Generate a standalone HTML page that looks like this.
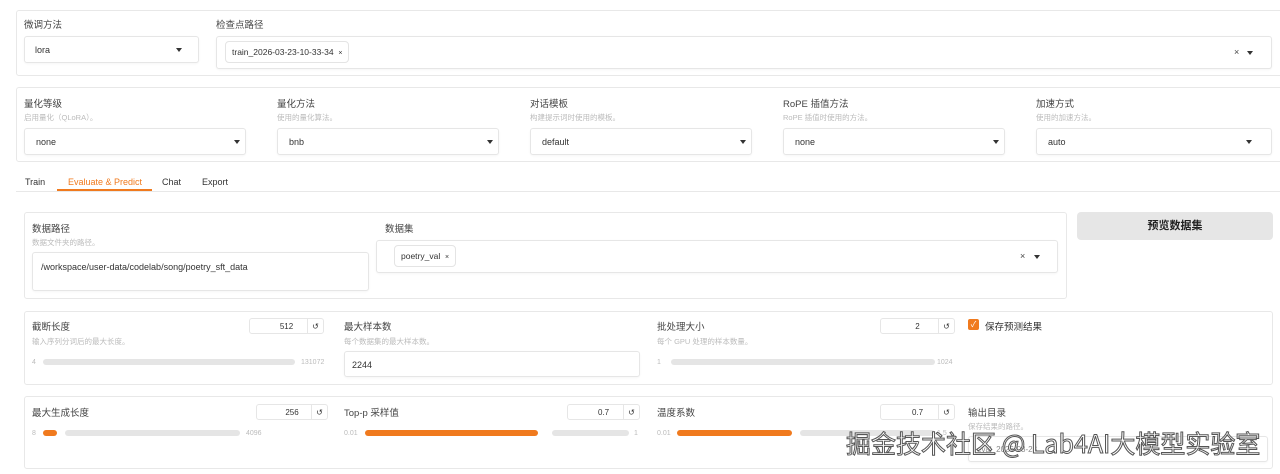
<!DOCTYPE html>
<html><head><meta charset="utf-8"><style>
*{box-sizing:border-box;margin:0;padding:0}
body{width:1280px;height:474px;background:#fff;font-family:"Liberation Sans","Noto Sans CJK SC",sans-serif;color:#333;position:relative;overflow:hidden;font-size:9px}
.a{position:absolute}
.box{position:absolute;border:1px solid #e8e8e8;border-radius:3px;background:#fff}
.lbl{position:absolute;font-size:9.5px;color:#444}
.sub{position:absolute;font-size:7.5px;color:#bbb}
.inp{position:absolute;border:1px solid #e6e6e6;border-radius:3px;background:#fff;font-size:9px;color:#333;box-shadow:0 1px 2px rgba(0,0,0,.04)}
.arr{position:absolute;width:0;height:0;border-left:3.5px solid transparent;border-right:3.5px solid transparent;border-top:4px solid #333}
.num{position:absolute;border:1px solid #e6e6e6;border-radius:3px;height:16px;font-size:8px;text-align:center;line-height:15px}
.num span{position:absolute;right:0;top:0;width:16px;height:14px;border-left:1px solid #e6e6e6;font-size:8px}
.track{position:absolute;height:6px;background:#e5e5e5;border-radius:3px}
.fill{position:absolute;height:6px;background:#f07a1e;border-radius:3px}
.mm{position:absolute;font-size:7px;color:#bbb}
.tag{position:absolute;border:1px solid #e4e4e4;border-radius:4px;font-size:8.5px;padding:0 6px;height:22px;line-height:21px;background:#fff}
.x{position:absolute;font-size:9px;color:#444}
</style></head><body>
<div class="box" style="left:16px;top:10px;width:1270px;height:66px"></div>
<div class="lbl" style="left:24px;top:17px">微调方法</div>
<div class="inp" style="left:24px;top:36px;width:175px;height:27px;padding:8px 10px">lora</div>
<div class="arr" style="left:176px;top:48px"></div>
<div class="lbl" style="left:216px;top:17px">检查点路径</div>
<div class="inp" style="left:216px;top:36px;width:1056px;height:33px"></div>
<div class="tag" style="left:225px;top:41px">train_2026-03-23-10-33-34 &nbsp;<span style="font-size:7px">×</span></div>
<div class="x" style="left:1234px;top:47px">×</div>
<div class="arr" style="left:1247px;top:51px"></div>

<div class="box" style="left:16px;top:87px;width:1270px;height:75px"></div>
<div class="lbl" style="left:24px;top:96px">量化等级</div><div class="sub" style="left:24px;top:112px">启用量化（QLoRA）。</div>
<div class="inp" style="left:24px;top:128px;width:222px;height:27px;padding:8px 11px">none</div><div class="arr" style="left:234px;top:140px"></div>
<div class="lbl" style="left:277px;top:96px">量化方法</div><div class="sub" style="left:277px;top:112px">使用的量化算法。</div>
<div class="inp" style="left:277px;top:128px;width:222px;height:27px;padding:8px 11px">bnb</div><div class="arr" style="left:487px;top:140px"></div>
<div class="lbl" style="left:530px;top:96px">对话模板</div><div class="sub" style="left:530px;top:112px">构建提示词时使用的模板。</div>
<div class="inp" style="left:530px;top:128px;width:222px;height:27px;padding:8px 11px">default</div><div class="arr" style="left:740px;top:140px"></div>
<div class="lbl" style="left:783px;top:96px">RoPE 插值方法</div><div class="sub" style="left:783px;top:112px">RoPE 插值时使用的方法。</div>
<div class="inp" style="left:783px;top:128px;width:222px;height:27px;padding:8px 11px">none</div><div class="arr" style="left:993px;top:140px"></div>
<div class="lbl" style="left:1036px;top:96px">加速方式</div><div class="sub" style="left:1036px;top:112px">使用的加速方法。</div>
<div class="inp" style="left:1036px;top:128px;width:236px;height:27px;padding:8px 11px">auto</div><div class="arr" style="left:1246px;top:140px"></div>

<div class="a" style="left:16px;top:191px;width:1264px;height:1px;background:#e8e8e8"></div>
<div class="a" style="left:25px;top:177px;font-size:9px">Train</div>
<div class="a" style="left:68px;top:177px;font-size:9px;color:#f07a1e">Evaluate &amp; Predict</div>
<div class="a" style="left:57px;top:189px;width:95px;height:2px;background:#f07a1e"></div>
<div class="a" style="left:162px;top:177px;font-size:9px">Chat</div>
<div class="a" style="left:202px;top:177px;font-size:9px">Export</div>

<div class="box" style="left:24px;top:212px;width:1043px;height:87px"></div>
<div class="lbl" style="left:32px;top:221px">数据路径</div><div class="sub" style="left:32px;top:237px">数据文件夹的路径。</div>
<div class="inp" style="left:32px;top:252px;width:337px;height:39px;padding:9px 8px">/workspace/user-data/codelab/song/poetry_sft_data</div>
<div class="lbl" style="left:385px;top:221px">数据集</div>
<div class="inp" style="left:376px;top:240px;width:682px;height:33px"></div>
<div class="tag" style="left:394px;top:245px">poetry_val &nbsp;<span style="font-size:7px">×</span></div>
<div class="x" style="left:1020px;top:251px">×</div><div class="arr" style="left:1034px;top:255px"></div>
<div class="a" style="left:1077px;top:212px;width:196px;height:28px;background:#e6e6e6;border-radius:4px;text-align:center;line-height:28px;font-size:11px;font-weight:bold;color:#222">预览数据集</div>

<div class="box" style="left:24px;top:311px;width:1249px;height:74px"></div>
<div class="lbl" style="left:32px;top:319px">截断长度</div><div class="sub" style="left:32px;top:336px">输入序列分词后的最大长度。</div>
<div class="num" style="left:249px;top:318px;width:75px">512<span>↺</span></div>
<div class="mm" style="left:32px;top:359px">4</div><div class="track" style="left:43px;top:359px;width:252px"></div><div class="mm" style="left:301px;top:359px">131072</div>
<div class="lbl" style="left:344px;top:319px">最大样本数</div><div class="sub" style="left:344px;top:336px">每个数据集的最大样本数。</div>
<div class="inp" style="left:344px;top:351px;width:296px;height:26px;padding:8px 7px">2244</div>
<div class="lbl" style="left:657px;top:319px">批处理大小</div><div class="sub" style="left:657px;top:336px">每个 GPU 处理的样本数量。</div>
<div class="num" style="left:880px;top:318px;width:75px">2<span>↺</span></div>
<div class="mm" style="left:657px;top:359px">1</div><div class="track" style="left:671px;top:359px;width:264px"></div><div class="mm" style="left:937px;top:359px">1024</div>
<div class="a" style="left:968px;top:319px;width:11px;height:11px;background:#f07a1e;border-radius:2px;color:#fff;font-size:8px;text-align:center;line-height:11px">✓</div>
<div class="lbl" style="left:985px;top:319px;color:#333">保存预测结果</div>

<div class="box" style="left:24px;top:396px;width:1249px;height:73px"></div>
<div class="lbl" style="left:32px;top:405px">最大生成长度</div>
<div class="num" style="left:256px;top:404px;width:72px">256<span>↺</span></div>
<div class="mm" style="left:32px;top:430px">8</div><div class="fill" style="left:43px;top:430px;width:14px"></div><div class="track" style="left:65px;top:430px;width:175px"></div><div class="mm" style="left:246px;top:430px">4096</div>
<div class="lbl" style="left:344px;top:405px">Top-p 采样值</div>
<div class="num" style="left:567px;top:404px;width:73px">0.7<span>↺</span></div>
<div class="mm" style="left:344px;top:430px">0.01</div><div class="fill" style="left:365px;top:430px;width:173px"></div><div class="track" style="left:552px;top:430px;width:77px"></div><div class="mm" style="left:634px;top:430px">1</div>
<div class="lbl" style="left:657px;top:405px">温度系数</div>
<div class="num" style="left:880px;top:404px;width:75px">0.7<span>↺</span></div>
<div class="mm" style="left:657px;top:430px">0.01</div><div class="fill" style="left:677px;top:430px;width:115px"></div><div class="track" style="left:800px;top:430px;width:135px"></div><div class="mm" style="left:937px;top:430px">1.5</div>
<div class="lbl" style="left:968px;top:405px">输出目录</div><div class="sub" style="left:968px;top:421px">保存结果的路径。</div>
<div class="inp" style="left:968px;top:436px;width:300px;height:26px;padding:8px 8px;font-size:8px;color:#888">eval_2026-03-23</div>
<div class="a" style="left:846px;top:425px;font-size:25px;color:#fff;-webkit-text-stroke:1px #555;font-family:'Noto Sans CJK SC',sans-serif;white-space:nowrap">掘金技术社区 @ Lab4AI大模型实验室</div>
</body></html>
